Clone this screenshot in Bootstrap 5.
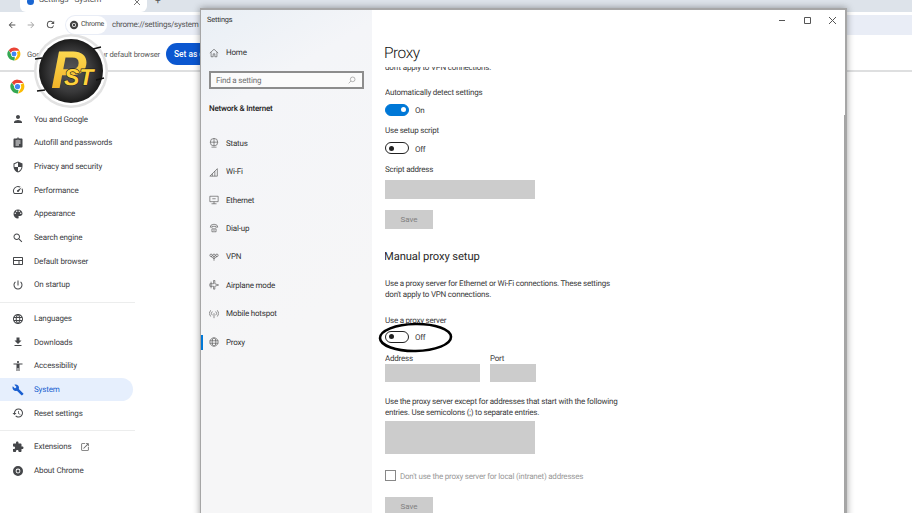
<!DOCTYPE html>
<html lang="en">
<head>
  <meta charset="UTF-8">
  <meta name="viewport" content="width=device-width, initial-scale=1.0">
  <link href="https://cdn.jsdelivr.net/npm/bootstrap@5.3.2/dist/css/bootstrap.min.css" rel="stylesheet">
  <style>
    html, body { height: 513px; overflow: hidden; }
    body { background: #fff; font-family: Roboto, "Liberation Sans", sans-serif; color: #333; font-size: 8px; letter-spacing: -.15px; line-height: 11px; position: relative; text-rendering: geometricPrecision; }
    svg { display: block; fill: currentColor; }

    /* chrome behind the window */
    .tabstrip { height: 12px; background: #dde3ea; padding-left: 20px; overflow: hidden; }
    .tabpiece { width: 127px; height: 12px; background: #fff; border-radius: 0 0 6px 6px; padding-left: 7px; gap: 5px; color: #555; font-size: 8.4px; white-space: nowrap; }
    .tabpiece span { margin-top: -11px; width: 90px; flex: none; }
    .tabdot { width: 7px; height: 7px; border-radius: 50%; background: #1a66d2; margin-top: -9px; flex: none; }
    .tabx { margin-top: -9px; flex: none; }
    .tabplus { margin-left: 8px; margin-top: -4px; color: #555; font-size: 10px; }
    .toolbar { height: 25px; color: #555; padding-left: 2.5px; }
    .toolbtn { width: 19px; flex: none; }
    .pill { height: 20px; background: #e9edf6; border-radius: 10px 0 0 10px; margin-left: 5.5px; padding-left: 1px; color: #555; font-size: 8px; letter-spacing: -.25px; }
    .chip { height: 18px; width: 41px; background: #fff; border-radius: 9px; padding-left: 3px; gap: 2px; color: #444; font-size: 7px; margin-right: 5px; flex: none; }
    .infobar { height: 35px; border-bottom: 2px solid #dedfe0; padding: 1px 0 0 7px; gap: 6px; font-size: 7.6px; color: #5a5a5a; }
    .infotext { width: 129px; flex: none; white-space: nowrap; }
    .setbtn { width: 60px; height: 22px; background: #0b57d0; border-radius: 11px 0 0 11px; color: #fff; font-weight: 500; font-size: 8.4px; padding: 0 0 0 8px; margin-left: 4px; border: 0; text-align: left; white-space: nowrap; overflow: hidden; }
    .sideblock { width: 135px; }
    .sidetop { height: 35.5px; padding: 0 0 6.5px 10px; }
    .crow { height: 23.67px; padding: 0 0 0 12px; gap: 10px; color: #3d4043; font-size: 8px; width: 133px; border-radius: 0 12px 12px 0; }
    .crow svg { width: 12px; height: 12px; color: #45474a; flex: none; }
    .crow svg.extlink { width: 10px; height: 10px; margin-left: -1px; color: #666; }
    .crow.on { background: #e6effd; color: #1a5fd0; }
    .crow.on svg { color: #1a5fd0; }
    .cdiv { height: 1px; background: #eceded; }
    .cdiv-a { margin: 5px 0 4px; }
    .cdiv-b { margin: 4.5px 0 4.5px; }

    /* windows settings */
    .win { position: absolute; left: 200px; top: 8px; width: 647px; height: 520px; background: #fff; border: solid #a6a6a6; border-width: 2px 2px 0 1px; box-shadow: 0 0 7px rgba(0,0,0,.38); }
    .winside { width: 171px; flex: none; background: linear-gradient(150deg, #e9eff5 0, #f4f5f8 18%, #f6f6f7 60%); color: #333; font-size: 8px; letter-spacing: -.2px; }
    .wintitle { height: 19px; padding: 4px 0 0 6px; font-size: 7.4px; line-height: 12px; color: #333; }
    .wside-home { height: 29px; padding-left: 8px; gap: 7px; margin-top: 9px; }
    .wside-home svg, .wrow svg { width: 10px; height: 10px; fill: none; stroke: #444; stroke-width: 1.4; flex: none; }
    .findbox { width: 155px; height: 18px; margin: 4px 0 0 8px; border: 2px solid #8d8d8d; background: #fbfbfb; padding: 0 6px 0 5px; color: #6f6f6f; font-size: 8px; }
    .findbox svg { width: 8px; height: 8px; fill: none; stroke: #777; stroke-width: 1.6; }
    .wsub { margin: 13.5px 0 0 8px; font-weight: 500; font-size: 8px; color: #222; height: 11px; }
    .wlist { margin-top: 15.5px; }
    .wrow { height: 28.43px; padding-left: 8px; gap: 7px; position: relative; }
    .wrow.on::before { content: ""; position: absolute; left: 0; top: 7px; width: 2px; height: 15px; background: #0078d7; }

    .winmain { min-width: 0; position: relative; letter-spacing: -.22px; }
    .winctl { height: 19px; padding-right: 8px; gap: 16px; color: #555; padding-top: 1px; }
    .winctl svg { width: 9px; height: 9px; fill: none; stroke: #555; stroke-width: 1; }
    .proxytitle { margin: 13px 0 0 12px; font-size: 15.5px; line-height: 22px; font-weight: 300; color: #111; height: 24px; letter-spacing: -.5px; }
    .scrollpart { position: absolute; left: 13px; right: 0; top: 56.5px; bottom: 0; overflow: hidden; color: #3a3a3a; }
    .clipline { margin-top: -4.5px; }
    .flabel { height: 11px; line-height: 12px; }
    .tgl { height: 13px; gap: 6px; }
    .tgltxt { padding-top: 2px; }
    .tglbody { width: 24px; height: 12px; border-radius: 7px; border: 1.5px solid #222; position: relative; flex: none; background: #fff; }
    .tglbody::after { content: ""; position: absolute; top: 2.5px; left: 2.5px; width: 5px; height: 5px; border-radius: 50%; background: #222; }
    .tglbody.lit { background: #0078d7; border-color: #0078d7; }
    .tglbody.lit::after { left: auto; right: 2.5px; background: #fff; }
    .greyfield, textarea.greyfield { background: #ccc; border: 0; border-radius: 0; padding: 0; min-height: 0; display: block; }
    .greyfield:disabled { background: #ccc; }
    .savebtn { width: 48px; height: 19px; background: #ccc; border: 0; border-radius: 0; padding: 0; color: #808080; font-size: 8px; line-height: 20px; display: block; }
    .savebtn:disabled { background: #ccc; color: #808080; opacity: 1; }
    .h-manual { font-size: 11.2px; line-height: 16px; font-weight: 400; margin: 20.5px 0 0 -1px; color: #2a2a2a; letter-spacing: -.1px; }
    .two-line { width: 228px; }
    .chkbox { width: 11px; height: 11px; border: 1px solid #888; flex: none; background: #fff; }
    .chkline { gap: 4px; color: #999; height: 11px; }
    .winscroll { position: absolute; right: 0; top: 105px; bottom: 0; width: 1.5px; background: #a4a4a4; }

    .logo { position: absolute; left: 32px; top: 32px; width: 78px; height: 78px; }
    .ringmark { position: absolute; left: 378px; top: 322px; width: 75px; height: 31px; }
  </style>
  <title>Settings - System</title>
</head>
<body>
  <svg width="0" height="0" class="position-absolute">
    <defs>
      <symbol id="i-person" viewBox="0 0 24 24"><path d="M12 12c2.21 0 4-1.79 4-4s-1.79-4-4-4-4 1.79-4 4 1.79 4 4 4zm0 2c-2.67 0-8 1.34-8 4v2h16v-2c0-2.66-5.33-4-8-4z"/></symbol>
      <symbol id="i-clip" viewBox="0 0 24 24"><path d="M19 3h-4.18C14.4 1.84 13.3 1 12 1c-1.3 0-2.4.84-2.82 2H5c-1.1 0-2 .9-2 2v14c0 1.1.9 2 2 2h14c1.1 0 2-.9 2-2V5c0-1.1-.9-2-2-2zm-7 0c.55 0 1 .45 1 1s-.45 1-1 1-1-.45-1-1 .45-1 1-1zm2 14H7v-2h7v2zm3-4H7v-2h10v2zm0-4H7V7h10v2z"/></symbol>
      <symbol id="i-shield" viewBox="0 0 24 24"><path d="M12 1L3 5v6c0 5.55 3.84 10.74 9 12 5.16-1.26 9-6.45 9-12V5l-9-4zm0 10.99h7c-.53 4.12-3.28 7.79-7 8.94V12H5V6.3l7-3.11v8.8z"/></symbol>
      <symbol id="i-speed" viewBox="0 0 24 24"><path d="M20.38 8.57l-1.23 1.85a8 8 0 0 1-.22 7.58H5.07A8 8 0 0 1 15.58 6.85l1.85-1.23A10 10 0 0 0 3.35 19a2 2 0 0 0 1.72 1h13.85a2 2 0 0 0 1.74-1 10 10 0 0 0-.27-10.44zm-9.79 6.84a2 2 0 0 0 2.83 0l5.66-8.49-8.49 5.66a2 2 0 0 0 0 2.83z"/></symbol>
      <symbol id="i-palette" viewBox="0 0 24 24"><path d="M12 3c-4.97 0-9 4.03-9 9s4.03 9 9 9c.83 0 1.5-.67 1.5-1.5 0-.39-.15-.74-.39-1.01-.23-.26-.38-.61-.38-.99 0-.83.67-1.5 1.5-1.5H16c2.76 0 5-2.24 5-5 0-4.42-4.03-8-9-8zm-5.5 9c-.83 0-1.5-.67-1.5-1.5S5.67 9 6.5 9 8 9.67 8 10.5 7.33 12 6.5 12zm3-4C8.67 8 8 7.33 8 6.5S8.67 5 9.5 5s1.5.67 1.5 1.5S10.33 8 9.5 8zm5 0c-.83 0-1.5-.67-1.5-1.5S13.67 5 14.5 5s1.5.67 1.5 1.5S15.33 8 14.5 8zm3 4c-.83 0-1.5-.67-1.5-1.5S16.67 9 17.5 9s1.5.67 1.5 1.5-.67 1.5-1.5 1.5z"/></symbol>
      <symbol id="i-search" viewBox="0 0 24 24"><path d="M15.5 14h-.79l-.28-.27C15.41 12.59 16 11.11 16 9.5 16 5.91 13.09 3 9.5 3S3 5.91 3 9.5 5.91 16 9.5 16c1.61 0 3.09-.59 4.23-1.57l.27.28v.79l5 4.99L20.49 19l-4.99-5zm-6 0C7.01 14 5 11.99 5 9.5S7.01 5 9.5 5 14 7.01 14 9.5 11.99 14 9.5 14z"/></symbol>
      <symbol id="i-web" viewBox="0 0 24 24"><path d="M20 4H4c-1.1 0-2 .9-2 2v12c0 1.1.9 2 2 2h16c1.1 0 2-.9 2-2V6c0-1.1-.9-2-2-2zm0 14h-5v-6h5v6zm-7 0H4v-6h9v6zM4 10V6h16v4H4z"/></symbol>
      <symbol id="i-power" viewBox="0 0 24 24"><path d="M13 3h-2v10h2V3zm4.83 2.17l-1.42 1.42C17.99 7.86 19 9.81 19 12c0 3.87-3.13 7-7 7s-7-3.13-7-7c0-2.19 1.01-4.14 2.58-5.42L6.17 5.17C4.23 6.82 3 9.26 3 12c0 4.97 4.03 9 9 9s9-4.03 9-9c0-2.74-1.23-5.18-3.17-6.83z"/></symbol>
      <symbol id="i-lang" viewBox="0 0 24 24"><path d="M11.99 2C6.47 2 2 6.48 2 12s4.47 10 9.99 10C17.52 22 22 17.52 22 12S17.52 2 11.99 2zm6.93 6h-2.95c-.32-1.25-.78-2.45-1.38-3.56 1.84.63 3.37 1.91 4.33 3.56zM12 4.04c.83 1.2 1.48 2.53 1.91 3.96h-3.82c.43-1.43 1.08-2.76 1.91-3.96zM4.26 14C4.1 13.36 4 12.69 4 12s.1-1.36.26-2h3.38c-.08.66-.14 1.32-.14 2 0 .68.06 1.34.14 2H4.26zm.82 2h2.95c.32 1.25.78 2.45 1.38 3.56-1.84-.63-3.37-1.9-4.33-3.56zm2.95-8H5.08c.96-1.66 2.49-2.93 4.33-3.56C8.81 5.55 8.35 6.75 8.03 8zM12 19.96c-.83-1.2-1.48-2.53-1.91-3.96h3.82c-.43 1.43-1.08 2.76-1.91 3.96zM14.34 14H9.66c-.09-.66-.16-1.32-.16-2 0-.68.07-1.35.16-2h4.68c.09.65.16 1.32.16 2 0 .68-.07 1.34-.16 2zm.25 5.56c.6-1.11 1.06-2.31 1.38-3.56h2.95c-.96 1.65-2.49 2.93-4.33 3.56zM16.36 14c.08-.66.14-1.32.14-2 0-.68-.06-1.34-.14-2h3.38c.16.64.26 1.31.26 2s-.1 1.36-.26 2h-3.38z"/></symbol>
      <symbol id="i-down" viewBox="0 0 24 24"><path d="M19 9h-4V3H9v6H5l7 7 7-7zM5 18v2h14v-2H5z"/></symbol>
      <symbol id="i-access" viewBox="0 0 24 24"><path d="M12 2c1.1 0 2 .9 2 2s-.9 2-2 2-2-.9-2-2 .9-2 2-2zm9 7h-6v13h-2v-6h-2v6H9V9H3V7h18v2z"/></symbol>
      <symbol id="i-wrench" viewBox="0 0 24 24"><path d="M22.7 19l-9.1-9.1c.9-2.3.4-5-1.5-6.9-2-2-5-2.4-7.4-1.3L9 6 6 9 1.6 4.7C.4 7.1.9 10.1 2.9 12.1c1.9 1.9 4.6 2.4 6.9 1.5l9.1 9.1c.4.4 1 .4 1.4 0l2.3-2.3c.5-.4.5-1.1.1-1.4z"/></symbol>
      <symbol id="i-restore" viewBox="0 0 24 24"><path d="M13 3c-4.97 0-9 4.03-9 9H1l3.89 3.89.07.14L9 12H6c0-3.87 3.13-7 7-7s7 3.13 7 7-3.13 7-7 7c-1.93 0-3.68-.79-4.94-2.06l-1.42 1.42C8.27 19.99 10.51 21 13 21c4.97 0 9-4.03 9-9s-4.03-9-9-9zm-1 5v5l4.28 2.54.72-1.21-3.5-2.08V8H12z"/></symbol>
      <symbol id="i-ext" viewBox="0 0 24 24"><path d="M20.5 11H19V7c0-1.1-.9-2-2-2h-4V3.5C13 2.12 11.88 1 10.5 1S8 2.12 8 3.5V5H4c-1.1 0-1.99.9-1.99 2v3.8H3.5c1.49 0 2.7 1.21 2.7 2.7s-1.21 2.7-2.7 2.7H2V20c0 1.1.9 2 2 2h3.8v-1.5c0-1.49 1.21-2.7 2.7-2.7 1.49 0 2.7 1.21 2.7 2.7V22H17c1.1 0 2-.9 2-2v-4h1.5c1.38 0 2.5-1.12 2.5-2.5S21.88 11 20.5 11z"/></symbol>
      <symbol id="i-open" viewBox="0 0 24 24"><path d="M19 19H5V5h7V3H5c-1.11 0-2 .9-2 2v14c0 1.1.89 2 2 2h14c1.1 0 2-.9 2-2v-7h-2v7zM14 3v2h3.59l-9.83 9.83 1.41 1.41L19 6.41V10h2V3h-7z"/></symbol>
      <symbol id="i-about" viewBox="0 0 24 24"><path fill-rule="evenodd" d="M12 2a10 10 0 1 0 0 20 10 10 0 0 0 0-20zm0 5.2a4.8 4.8 0 1 1 0 9.6 4.8 4.8 0 0 1 0-9.6zm0 1.8a3 3 0 1 0 0 6 3 3 0 0 0 0-6z"/></symbol>
      <symbol id="i-chromelogo" viewBox="0 0 24 24">
        <path fill="#ea4335" d="M12 1a11 11 0 0 1 9.53 5.5H12a5.5 5.5 0 0 0-5.2 3.7L2.9 5.4A11 11 0 0 1 12 1z"/>
        <path fill="#fbbc04" d="M21.53 6.5A11 11 0 0 1 12.6 23l4.2-7.2A5.5 5.5 0 0 0 16.7 9.2L21.53 6.5z"/>
        <path fill="#34a853" d="M2.9 5.4l4.8 8.2a5.5 5.5 0 0 0 6 3.9L12.6 23A11 11 0 0 1 2.9 5.4z"/>
        <circle cx="12" cy="12" r="5.3" fill="#fff"/><circle cx="12" cy="12" r="4.2" fill="#4285f4"/>
      </symbol>
    </defs>
  </svg>

  <div class="tabstrip d-flex">
    <div class="tabpiece d-flex align-items-center">
      <i class="tabdot"></i><span>Settings - System</span>
      <svg class="tabx" width="6" height="6" viewBox="0 0 6 6"><path d="M0 0l6 6M6 0L0 6" stroke="#777" stroke-width="1"/></svg>
    </div>
    <span class="tabplus">+</span>
  </div>

  <div class="toolbar d-flex align-items-center">
    <div class="toolbtn d-flex justify-content-center"><svg width="10" height="10" viewBox="0 0 24 24"><path d="M20 11H7.83l5.59-5.59L12 4l-8 8 8 8 1.41-1.41L7.83 13H20v-2z"/></svg></div>
    <div class="toolbtn d-flex justify-content-center"><svg width="10" height="10" viewBox="0 0 24 24" style="color:#aaa"><path d="M4 11h12.17l-5.59-5.59L12 4l8 8-8 8-1.41-1.41L16.17 13H4v-2z"/></svg></div>
    <div class="toolbtn d-flex justify-content-center"><svg width="11" height="11" viewBox="0 0 24 24"><path d="M17.65 6.35A7.96 7.96 0 0 0 12 4a8 8 0 1 0 7.73 10h-2.08A6 6 0 1 1 12 6c1.66 0 3.14.69 4.22 1.78L13 11h7V4l-2.35 2.35z"/></svg></div>
    <div class="pill d-flex align-items-center flex-grow-1">
      <div class="chip d-flex align-items-center"><svg width="10" height="10"><use href="#i-about"/></svg>Chrome</div>
      <span>chrome://settings/system</span>
    </div>
  </div>

  <div class="infobar d-flex align-items-center">
    <svg width="14" height="14"><use href="#i-chromelogo"/></svg>
    <span class="infotext">Google Chrome isn't your default browser</span>
    <button type="button" class="setbtn">Set as default</button>
  </div>

  <nav class="sideblock">
    <div class="sidetop d-flex align-items-center"><svg width="15" height="15"><use href="#i-chromelogo"/></svg></div>
    <div class="crow d-flex align-items-center"><svg><use href="#i-person"/></svg>You and Google</div>
    <div class="crow d-flex align-items-center"><svg><use href="#i-clip"/></svg>Autofill and passwords</div>
    <div class="crow d-flex align-items-center"><svg><use href="#i-shield"/></svg>Privacy and security</div>
    <div class="crow d-flex align-items-center"><svg><use href="#i-speed"/></svg>Performance</div>
    <div class="crow d-flex align-items-center"><svg><use href="#i-palette"/></svg>Appearance</div>
    <div class="crow d-flex align-items-center"><svg><use href="#i-search"/></svg>Search engine</div>
    <div class="crow d-flex align-items-center"><svg><use href="#i-web"/></svg>Default browser</div>
    <div class="crow d-flex align-items-center"><svg><use href="#i-power"/></svg>On startup</div>
    <div class="cdiv cdiv-a"></div>
    <div class="crow d-flex align-items-center"><svg><use href="#i-lang"/></svg>Languages</div>
    <div class="crow d-flex align-items-center"><svg><use href="#i-down"/></svg>Downloads</div>
    <div class="crow d-flex align-items-center"><svg><use href="#i-access"/></svg>Accessibility</div>
    <div class="crow on d-flex align-items-center"><svg><use href="#i-wrench"/></svg>System</div>
    <div class="crow d-flex align-items-center"><svg><use href="#i-restore"/></svg>Reset settings</div>
    <div class="cdiv cdiv-b"></div>
    <div class="crow d-flex align-items-center"><svg><use href="#i-ext"/></svg>Extensions<svg class="extlink"><use href="#i-open"/></svg></div>
    <div class="crow d-flex align-items-center"><svg><use href="#i-about"/></svg>About Chrome</div>
  </nav>

  <!-- settings window sits on top of the browser -->
  <div class="win d-flex">
    <aside class="winside">
      <div class="wintitle">Settings</div>
      <div class="wside-home d-flex align-items-center">
        <svg viewBox="0 0 24 24"><path d="M2 12L12 3l10 9M5 10v11h5v-7h4v7h5V10"/></svg>Home
      </div>
      <div class="findbox d-flex align-items-center justify-content-between">
        <span>Find a setting</span>
        <svg viewBox="0 0 24 24"><circle cx="14" cy="10" r="7"/><path d="M9 15l-7 7"/></svg>
      </div>
      <div class="wsub">Network &amp; Internet</div>
      <div class="wlist">
        <div class="wrow d-flex align-items-center"><svg viewBox="0 0 24 24"><circle cx="12" cy="10" r="9"/><path d="M3 10h18M12 1v18M6 22h12"/></svg>Status</div>
        <div class="wrow d-flex align-items-center"><svg viewBox="0 0 24 24"><path d="M2 22L20 4v18zM8 22V16M14 22V10"/></svg>Wi-Fi</div>
        <div class="wrow d-flex align-items-center"><svg viewBox="0 0 24 24"><path d="M2 3h20v13H2zM12 16v5M6 21h12M8 9h8"/></svg>Ethernet</div>
        <div class="wrow d-flex align-items-center"><svg viewBox="0 0 24 24"><path d="M3 10a9 7 0 0 1 18 0h-5V8H8v2zM7 14h10v7H7zM10 17h4"/></svg>Dial-up</div>
        <div class="wrow d-flex align-items-center"><svg viewBox="0 0 24 24"><circle cx="5" cy="8" r="3"/><circle cx="12" cy="8" r="3"/><circle cx="19" cy="8" r="3"/><path d="M5 11l7 5 7-5M12 11v10"/></svg>VPN</div>
        <div class="wrow d-flex align-items-center"><svg viewBox="0 0 24 24"><path d="M11 1h3v8l9 3-9 3v7h-3v-7H2v-6h9zM5 4v16"/></svg>Airplane mode</div>
        <div class="wrow d-flex align-items-center"><svg viewBox="0 0 24 24"><path d="M12 10v12M8 6a6 6 0 0 0 0 9M16 6a6 6 0 0 1 0 9M4 3a11 11 0 0 0 0 15M20 3a11 11 0 0 1 0 15"/></svg>Mobile hotspot</div>
        <div class="wrow on d-flex align-items-center"><svg viewBox="0 0 24 24"><circle cx="12" cy="12" r="10"/><ellipse cx="12" cy="12" rx="4.5" ry="10"/><path d="M2 9h20M2 15h20"/></svg>Proxy</div>
      </div>
    </aside>

    <main class="winmain flex-grow-1">
      <div class="winctl d-flex align-items-center justify-content-end">
        <svg viewBox="0 0 9 9"><path d="M1 4.5h6"/></svg>
        <svg viewBox="0 0 9 9"><path d="M1.5 1.5h6v6h-6z"/></svg>
        <svg viewBox="0 0 9 9"><path d="M1 1l7 7M8 1L1 8"/></svg>
      </div>
      <h1 class="proxytitle">Proxy</h1>
      <div class="scrollpart">
        <div class="clipline">don't apply to VPN connections.</div>

        <div class="flabel" style="margin-top:13.5px">Automatically detect settings</div>
        <div class="tgl d-flex align-items-center" style="margin-top:5.5px"><span class="tglbody lit"></span><span class="tgltxt">On</span></div>

        <div class="flabel" style="margin-top:9px">Use setup script</div>
        <div class="tgl d-flex align-items-center" style="margin-top:5.5px"><span class="tglbody"></span><span class="tgltxt">Off</span></div>

        <div class="flabel" style="margin-top:9px">Script address</div>
        <input class="form-control greyfield" style="width:150px;height:19px;margin-top:5px" disabled>
        <button class="btn savebtn" style="margin-top:11px" disabled>Save</button>

        <h2 class="h-manual">Manual proxy setup</h2>
        <div class="two-line" style="margin-top:13px">Use a proxy server for Ethernet or Wi-Fi connections. These settings don't apply to VPN connections.</div>

        <div class="flabel" style="margin-top:15px">Use a proxy server</div>
        <div class="tgl d-flex align-items-center" style="margin-top:4px"><span class="tglbody"></span><span class="tgltxt">Off</span></div>

        <div class="d-flex" style="margin-top:10px;gap:10px">
          <div style="width:95px"><div class="flabel">Address</div><input class="form-control greyfield" style="width:95px;height:18px" disabled></div>
          <div style="width:46px"><div class="flabel">Port</div><input class="form-control greyfield" style="width:46px;height:18px" disabled></div>
        </div>

        <div style="margin-top:13.5px;width:245px">Use the proxy server except for addresses that start with the following entries. Use semicolons (;) to separate entries.</div>
        <textarea class="form-control greyfield" style="width:150px;height:33px;margin-top:3px;resize:none" disabled></textarea>

        <div class="chkline d-flex align-items-center" style="margin-top:16px"><span class="chkbox"></span><span class="tgltxt">Don't use the proxy server for local (intranet) addresses</span></div>
        <button class="btn savebtn" style="margin-top:16px" disabled>Save</button>
      </div>
      <div class="winscroll"></div>
    </main>
  </div>

  <!-- channel logo watermark -->
  <svg class="logo" viewBox="0 0 78 78">
    <defs>
      <radialGradient id="discfill" cx="50%" cy="50%" r="50%"><stop offset="0" stop-color="#58585a"/><stop offset=".65" stop-color="#39393a"/><stop offset="1" stop-color="#1a1a1a"/></radialGradient>
      <linearGradient id="goldfill" x1="0" y1="0" x2="0" y2="1"><stop offset="0" stop-color="#ffe25a"/><stop offset="1" stop-color="#eea81c"/></linearGradient>
    </defs>
    <circle cx="39" cy="39" r="37" fill="#e2e2e2"/>
    <circle cx="39" cy="39" r="34.5" fill="#fff"/>
    <circle cx="39" cy="39" r="32" fill="url(#discfill)"/>
    <path d="M3 27l7-1M61 17l8-2M64 48l8-2M5 59l8-1" stroke="#111" stroke-width="1.4"/>
    <text x="19" y="56" font-family="Liberation Sans, sans-serif" font-weight="700" font-style="italic" font-size="53" fill="url(#goldfill)">P</text>
    <text x="32" y="53" font-family="Liberation Sans, sans-serif" font-weight="700" font-style="italic" font-size="23" fill="#ffd23a" stroke="#222" stroke-width="1.2" paint-order="stroke">ST</text>
  </svg>

  <svg class="ringmark" viewBox="0 0 75 31" style="fill:none"><ellipse cx="37.5" cy="15.5" rx="35.5" ry="13.5" transform="rotate(-1 37.5 15.5)" stroke="#000" stroke-width="2.6"/></svg>

  <script src="https://cdn.jsdelivr.net/npm/bootstrap@5.3.2/dist/js/bootstrap.bundle.min.js"></script>
</body>
</html>
